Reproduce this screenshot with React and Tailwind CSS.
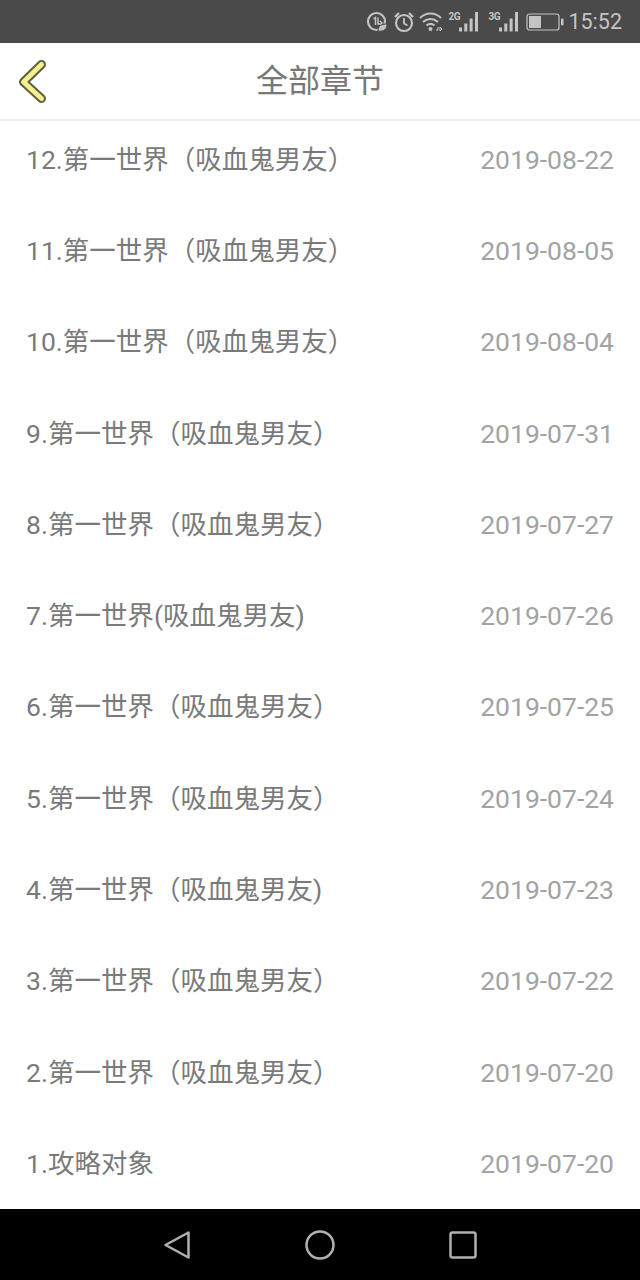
const chapters = [
  { title: "12.第一世界（吸血鬼男友）", date: "2019-08-22" },
  { title: "11.第一世界（吸血鬼男友）", date: "2019-08-05" },
  { title: "10.第一世界（吸血鬼男友）", date: "2019-08-04" },
  { title: "9.第一世界（吸血鬼男友）", date: "2019-07-31" },
  { title: "8.第一世界（吸血鬼男友）", date: "2019-07-27" },
  { title: "7.第一世界(吸血鬼男友)", date: "2019-07-26" },
  { title: "6.第一世界（吸血鬼男友）", date: "2019-07-25" },
  { title: "5.第一世界（吸血鬼男友）", date: "2019-07-24" },
  { title: "4.第一世界（吸血鬼男友)", date: "2019-07-23" },
  { title: "3.第一世界（吸血鬼男友）", date: "2019-07-22" },
  { title: "2.第一世界（吸血鬼男友）", date: "2019-07-20" },
  { title: "1.攻略对象", date: "2019-07-20" },
];

function Signal({ label }) {
  return (
    <div className="relative w-[32px] h-[22px]">
      <span className="absolute left-0 top-[1px] text-[10px] leading-[10px] font-bold tracking-tighter text-[#c4c4c4]">{label}</span>
      <svg width="32" height="22" viewBox="0 0 32 22" fill="#c4c4c4">
        <rect x="11" y="16.500" width="3" height="4" />
        <rect x="16.300" y="12.500" width="3" height="8" />
        <rect x="21.600" y="7.500" width="3" height="13" />
        <rect x="27" y="1" width="3" height="19.500" />
      </svg>
    </div>
  );
}

function StatusBar() {
  return (
    <div className="h-[43px] bg-[#4a4a4a] flex items-center justify-end pr-[18px] shrink-0">
      <svg width="22" height="22" viewBox="0 0 22 22" fill="none" className="mr-[5px]">
        <circle cx="10.500" cy="10.500" r="8.500" stroke="#c4c4c4" strokeWidth="2.200" />
        <path d="M7.500 8l2-1.500V14M12 6.500V13h3M14 10l2 2-2 2" stroke="#c4c4c4" strokeWidth="1.500" />
        <path d="M12 20c0-5 3-7 9-7 0 5-3 8-9 7z" fill="#c4c4c4" stroke="#4a4a4a" />
      </svg>
      <svg width="22" height="22" viewBox="0 0 22 22" fill="none" className="mr-[4px]">
        <circle cx="11" cy="12" r="8" stroke="#c4c4c4" strokeWidth="2.200" />
        <path d="M11 7v5.500l3.500 2" stroke="#c4c4c4" strokeWidth="1.800" />
        <path d="M2 6l4-4M20 6l-4-4" stroke="#c4c4c4" strokeWidth="2.200" />
      </svg>
      <svg width="25" height="22" viewBox="0 0 25 22" fill="none" className="mr-[4px]">
        <path d="M1 7c6-6 15-6 21 0M4 11c4.500-4 10.500-4 15 0M7.500 14.500c2.500-2 5.500-2 8 0" stroke="#c4c4c4" strokeWidth="2" />
        <circle cx="11.500" cy="18" r="2" fill="#c4c4c4" />
        <path d="M17 19h2v-3M21 16v4l2-2z" stroke="#c4c4c4" strokeWidth="1" />
      </svg>
      <Signal label="2G" />
      <div className="w-[8px]" />
      <Signal label="3G" />
      <div className="w-[6px]" />
      <svg width="38" height="18" viewBox="0 0 38 18" fill="none" className="mr-[4px]">
        <rect x="1" y="1" width="32" height="16" rx="2.500" stroke="#c4c4c4" strokeWidth="1.200" />
        <rect x="3" y="3" width="12" height="12" fill="#c4c4c4" />
        <rect x="35" y="5.500" width="2.500" height="7" rx="1" fill="#c4c4c4" />
      </svg>
      <span className="text-[21.500px] leading-none text-[#c4c4c4]">15:52</span>
    </div>
  );
}

function NavBar() {
  return (
    <div className="relative h-[78px] bg-white border-b-2 border-[#efefef] flex items-center justify-center shrink-0">
      <svg width="32" height="46" viewBox="0 0 32 46" fill="none" className="absolute left-[17px] top-[16px]">
        <path d="M24.500 5.500L6.500 23L24.500 39.500" stroke="#5f5f42" strokeWidth="9" strokeLinecap="round" strokeLinejoin="round" />
        <path d="M24.500 5.500L6.500 23L24.500 39.500" stroke="#f5f08a" strokeWidth="5" strokeLinecap="round" strokeLinejoin="round" />
      </svg>
      <h1 className="text-[32px] leading-none font-normal text-[#777777]">全部章节</h1>
    </div>
  );
}

function ChapterRow({ title, date }) {
  return (
    <div className="h-[91.270px] flex items-center justify-between pl-[26px] pr-[26px]">
      <span className="text-[26.500px] leading-none text-[#7a7a7a]">{title}</span>
      <span className="text-[26.500px] leading-none text-[#a3a3a3]">{date}</span>
    </div>
  );
}

function NavButtons() {
  return (
    <div className="h-[71px] bg-black flex items-center justify-center gap-[114px] shrink-0">
      <svg width="28" height="30" viewBox="0 0 28 30" fill="none">
        <path d="M25.500 2.500V27.500L2.500 15z" stroke="#b0b0b0" strokeWidth="2.500" strokeLinejoin="round" />
      </svg>
      <svg width="30" height="30" viewBox="0 0 30 30" fill="none">
        <circle cx="15" cy="15" r="13.500" stroke="#b0b0b0" strokeWidth="2.500" />
      </svg>
      <svg width="28" height="28" viewBox="0 0 28 28" fill="none">
        <rect x="1.500" y="1.500" width="25" height="25" rx="2" stroke="#b0b0b0" strokeWidth="2.500" />
      </svg>
    </div>
  );
}

export default function App() {
  return (
    <div className="w-[640px] h-[1280px] flex flex-col overflow-hidden bg-white font-['Roboto','Noto_Sans_CJK_SC',sans-serif]">
      <StatusBar />
      <NavBar />
      <div className="flex-1 overflow-hidden">
        <div className="-mt-[6.500px]">
          {chapters.map((c) => (
            <ChapterRow key={c.title} title={c.title} date={c.date} />
          ))}
        </div>
      </div>
      <NavButtons />
    </div>
  );
}
